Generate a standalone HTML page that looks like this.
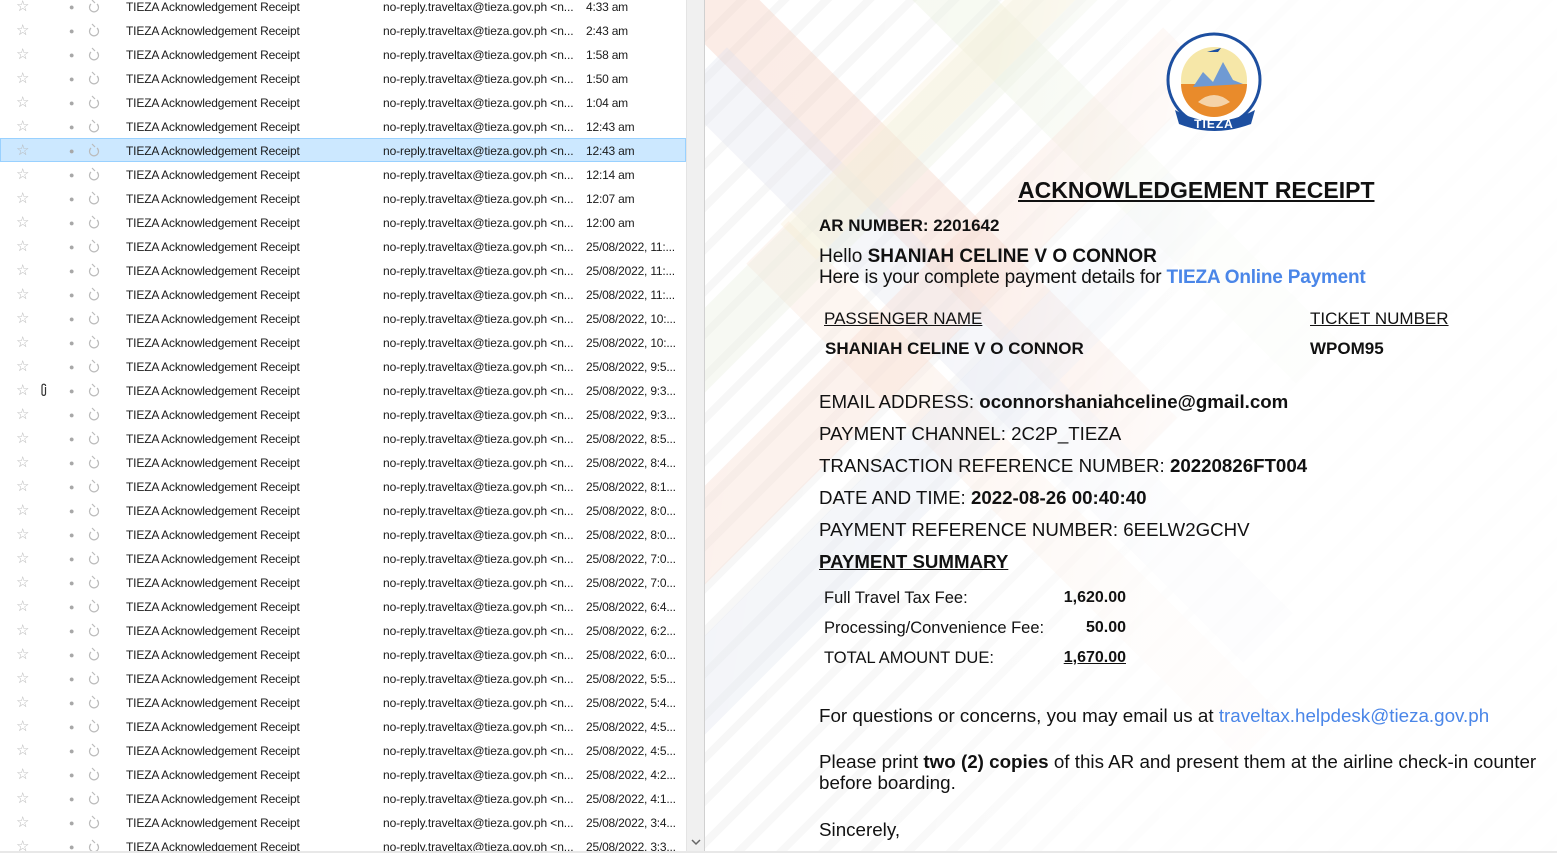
<!DOCTYPE html>
<html><head><meta charset="utf-8"><style>
*{margin:0;padding:0;box-sizing:border-box}
body{width:1557px;height:853px;overflow:hidden;background:#fff;font-family:"Liberation Sans",Arial,sans-serif;position:relative}
#list{position:absolute;left:0;top:0;width:686px;height:853px;overflow:hidden;background:#fff}
.r{position:absolute;left:0;width:686px;height:24px;font-size:12px;line-height:24px;color:#1a1a1a;white-space:nowrap}
.r.sel{background:#cce8ff;border:1px solid #99d1ff}
.r span{position:absolute;top:1px}
.st{left:16px;color:#b8b8b8;font-size:15px}
.dt{left:69px;color:#a8a8a8;font-size:9px}
.s1{left:126px;letter-spacing:-0.15px}.s2{left:383px;letter-spacing:-0.1px}.s3{left:586px;letter-spacing:-0.2px}
#sb{position:absolute;left:686px;top:0;width:18px;height:853px;background:#f0f0f0;border-left:1px solid #e4e4e4}
#div{position:absolute;left:704px;top:0;width:1px;height:853px;background:#d0d0d0}
#pane{position:absolute;left:705px;top:0;width:852px;height:853px;overflow:hidden;background:repeating-linear-gradient(135deg,#fff 0 22px,#f7f7f7 22px 30px)}
.band{position:absolute;transform:rotate(45deg);opacity:.35}
.band2{position:absolute;transform:rotate(-45deg);opacity:.35}
.t{position:absolute;white-space:nowrap;color:#111}
b{font-weight:bold}
.blue{color:#4a86e8}
</style></head><body>
<div id="list">
<div class="r" style="top:-6px"><span class="st">☆</span><span class="dt">●</span><svg style="position:absolute;left:88px;top:5px" width="12" height="14" viewBox="0 0 12 14"><path d="M4 1 L7 4 M3 5 A4.5 4.5 0 1 0 9 5" fill="none" stroke="#bbb" stroke-width="1.2"/></svg><span class="s1">TIEZA Acknowledgement Receipt</span><span class="s2">no-reply.traveltax@tieza.gov.ph &lt;n...</span><span class="s3">4:33 am</span></div>
<div class="r" style="top:18px"><span class="st">☆</span><span class="dt">●</span><svg style="position:absolute;left:88px;top:5px" width="12" height="14" viewBox="0 0 12 14"><path d="M4 1 L7 4 M3 5 A4.5 4.5 0 1 0 9 5" fill="none" stroke="#bbb" stroke-width="1.2"/></svg><span class="s1">TIEZA Acknowledgement Receipt</span><span class="s2">no-reply.traveltax@tieza.gov.ph &lt;n...</span><span class="s3">2:43 am</span></div>
<div class="r" style="top:42px"><span class="st">☆</span><span class="dt">●</span><svg style="position:absolute;left:88px;top:5px" width="12" height="14" viewBox="0 0 12 14"><path d="M4 1 L7 4 M3 5 A4.5 4.5 0 1 0 9 5" fill="none" stroke="#bbb" stroke-width="1.2"/></svg><span class="s1">TIEZA Acknowledgement Receipt</span><span class="s2">no-reply.traveltax@tieza.gov.ph &lt;n...</span><span class="s3">1:58 am</span></div>
<div class="r" style="top:66px"><span class="st">☆</span><span class="dt">●</span><svg style="position:absolute;left:88px;top:5px" width="12" height="14" viewBox="0 0 12 14"><path d="M4 1 L7 4 M3 5 A4.5 4.5 0 1 0 9 5" fill="none" stroke="#bbb" stroke-width="1.2"/></svg><span class="s1">TIEZA Acknowledgement Receipt</span><span class="s2">no-reply.traveltax@tieza.gov.ph &lt;n...</span><span class="s3">1:50 am</span></div>
<div class="r" style="top:90px"><span class="st">☆</span><span class="dt">●</span><svg style="position:absolute;left:88px;top:5px" width="12" height="14" viewBox="0 0 12 14"><path d="M4 1 L7 4 M3 5 A4.5 4.5 0 1 0 9 5" fill="none" stroke="#bbb" stroke-width="1.2"/></svg><span class="s1">TIEZA Acknowledgement Receipt</span><span class="s2">no-reply.traveltax@tieza.gov.ph &lt;n...</span><span class="s3">1:04 am</span></div>
<div class="r" style="top:114px"><span class="st">☆</span><span class="dt">●</span><svg style="position:absolute;left:88px;top:5px" width="12" height="14" viewBox="0 0 12 14"><path d="M4 1 L7 4 M3 5 A4.5 4.5 0 1 0 9 5" fill="none" stroke="#bbb" stroke-width="1.2"/></svg><span class="s1">TIEZA Acknowledgement Receipt</span><span class="s2">no-reply.traveltax@tieza.gov.ph &lt;n...</span><span class="s3">12:43 am</span></div>
<div class="r sel" style="top:138px"><span class="st" style="left:15px;top:0">☆</span><span class="dt" style="left:68px;top:0">●</span><svg style="position:absolute;left:87px;top:4px" width="12" height="14" viewBox="0 0 12 14"><path d="M4 1 L7 4 M3 5 A4.5 4.5 0 1 0 9 5" fill="none" stroke="#bbb" stroke-width="1.2"/></svg><span class="s1" style="left:125px;top:0">TIEZA Acknowledgement Receipt</span><span class="s2" style="left:382px;top:0">no-reply.traveltax@tieza.gov.ph &lt;n...</span><span class="s3" style="left:585px;top:0">12:43 am</span></div>
<div class="r" style="top:162px"><span class="st">☆</span><span class="dt">●</span><svg style="position:absolute;left:88px;top:5px" width="12" height="14" viewBox="0 0 12 14"><path d="M4 1 L7 4 M3 5 A4.5 4.5 0 1 0 9 5" fill="none" stroke="#bbb" stroke-width="1.2"/></svg><span class="s1">TIEZA Acknowledgement Receipt</span><span class="s2">no-reply.traveltax@tieza.gov.ph &lt;n...</span><span class="s3">12:14 am</span></div>
<div class="r" style="top:186px"><span class="st">☆</span><span class="dt">●</span><svg style="position:absolute;left:88px;top:5px" width="12" height="14" viewBox="0 0 12 14"><path d="M4 1 L7 4 M3 5 A4.5 4.5 0 1 0 9 5" fill="none" stroke="#bbb" stroke-width="1.2"/></svg><span class="s1">TIEZA Acknowledgement Receipt</span><span class="s2">no-reply.traveltax@tieza.gov.ph &lt;n...</span><span class="s3">12:07 am</span></div>
<div class="r" style="top:210px"><span class="st">☆</span><span class="dt">●</span><svg style="position:absolute;left:88px;top:5px" width="12" height="14" viewBox="0 0 12 14"><path d="M4 1 L7 4 M3 5 A4.5 4.5 0 1 0 9 5" fill="none" stroke="#bbb" stroke-width="1.2"/></svg><span class="s1">TIEZA Acknowledgement Receipt</span><span class="s2">no-reply.traveltax@tieza.gov.ph &lt;n...</span><span class="s3">12:00 am</span></div>
<div class="r" style="top:234px"><span class="st">☆</span><span class="dt">●</span><svg style="position:absolute;left:88px;top:5px" width="12" height="14" viewBox="0 0 12 14"><path d="M4 1 L7 4 M3 5 A4.5 4.5 0 1 0 9 5" fill="none" stroke="#bbb" stroke-width="1.2"/></svg><span class="s1">TIEZA Acknowledgement Receipt</span><span class="s2">no-reply.traveltax@tieza.gov.ph &lt;n...</span><span class="s3">25/08/2022, 11:...</span></div>
<div class="r" style="top:258px"><span class="st">☆</span><span class="dt">●</span><svg style="position:absolute;left:88px;top:5px" width="12" height="14" viewBox="0 0 12 14"><path d="M4 1 L7 4 M3 5 A4.5 4.5 0 1 0 9 5" fill="none" stroke="#bbb" stroke-width="1.2"/></svg><span class="s1">TIEZA Acknowledgement Receipt</span><span class="s2">no-reply.traveltax@tieza.gov.ph &lt;n...</span><span class="s3">25/08/2022, 11:...</span></div>
<div class="r" style="top:282px"><span class="st">☆</span><span class="dt">●</span><svg style="position:absolute;left:88px;top:5px" width="12" height="14" viewBox="0 0 12 14"><path d="M4 1 L7 4 M3 5 A4.5 4.5 0 1 0 9 5" fill="none" stroke="#bbb" stroke-width="1.2"/></svg><span class="s1">TIEZA Acknowledgement Receipt</span><span class="s2">no-reply.traveltax@tieza.gov.ph &lt;n...</span><span class="s3">25/08/2022, 11:...</span></div>
<div class="r" style="top:306px"><span class="st">☆</span><span class="dt">●</span><svg style="position:absolute;left:88px;top:5px" width="12" height="14" viewBox="0 0 12 14"><path d="M4 1 L7 4 M3 5 A4.5 4.5 0 1 0 9 5" fill="none" stroke="#bbb" stroke-width="1.2"/></svg><span class="s1">TIEZA Acknowledgement Receipt</span><span class="s2">no-reply.traveltax@tieza.gov.ph &lt;n...</span><span class="s3">25/08/2022, 10:...</span></div>
<div class="r" style="top:330px"><span class="st">☆</span><span class="dt">●</span><svg style="position:absolute;left:88px;top:5px" width="12" height="14" viewBox="0 0 12 14"><path d="M4 1 L7 4 M3 5 A4.5 4.5 0 1 0 9 5" fill="none" stroke="#bbb" stroke-width="1.2"/></svg><span class="s1">TIEZA Acknowledgement Receipt</span><span class="s2">no-reply.traveltax@tieza.gov.ph &lt;n...</span><span class="s3">25/08/2022, 10:...</span></div>
<div class="r" style="top:354px"><span class="st">☆</span><span class="dt">●</span><svg style="position:absolute;left:88px;top:5px" width="12" height="14" viewBox="0 0 12 14"><path d="M4 1 L7 4 M3 5 A4.5 4.5 0 1 0 9 5" fill="none" stroke="#bbb" stroke-width="1.2"/></svg><span class="s1">TIEZA Acknowledgement Receipt</span><span class="s2">no-reply.traveltax@tieza.gov.ph &lt;n...</span><span class="s3">25/08/2022, 9:5...</span></div>
<div class="r" style="top:378px"><span class="st">☆</span><svg style="position:absolute;left:40px;top:5px" width="8" height="14" viewBox="0 0 8 14"><path d="M5.5 4 V11 A1.8 1.8 0 0 1 2 11 V3 A1.6 1.6 0 0 1 5.6 3" fill="none" stroke="#333" stroke-width="1.2"/></svg><span class="dt">●</span><svg style="position:absolute;left:88px;top:5px" width="12" height="14" viewBox="0 0 12 14"><path d="M4 1 L7 4 M3 5 A4.5 4.5 0 1 0 9 5" fill="none" stroke="#bbb" stroke-width="1.2"/></svg><span class="s1">TIEZA Acknowledgement Receipt</span><span class="s2">no-reply.traveltax@tieza.gov.ph &lt;n...</span><span class="s3">25/08/2022, 9:3...</span></div>
<div class="r" style="top:402px"><span class="st">☆</span><span class="dt">●</span><svg style="position:absolute;left:88px;top:5px" width="12" height="14" viewBox="0 0 12 14"><path d="M4 1 L7 4 M3 5 A4.5 4.5 0 1 0 9 5" fill="none" stroke="#bbb" stroke-width="1.2"/></svg><span class="s1">TIEZA Acknowledgement Receipt</span><span class="s2">no-reply.traveltax@tieza.gov.ph &lt;n...</span><span class="s3">25/08/2022, 9:3...</span></div>
<div class="r" style="top:426px"><span class="st">☆</span><span class="dt">●</span><svg style="position:absolute;left:88px;top:5px" width="12" height="14" viewBox="0 0 12 14"><path d="M4 1 L7 4 M3 5 A4.5 4.5 0 1 0 9 5" fill="none" stroke="#bbb" stroke-width="1.2"/></svg><span class="s1">TIEZA Acknowledgement Receipt</span><span class="s2">no-reply.traveltax@tieza.gov.ph &lt;n...</span><span class="s3">25/08/2022, 8:5...</span></div>
<div class="r" style="top:450px"><span class="st">☆</span><span class="dt">●</span><svg style="position:absolute;left:88px;top:5px" width="12" height="14" viewBox="0 0 12 14"><path d="M4 1 L7 4 M3 5 A4.5 4.5 0 1 0 9 5" fill="none" stroke="#bbb" stroke-width="1.2"/></svg><span class="s1">TIEZA Acknowledgement Receipt</span><span class="s2">no-reply.traveltax@tieza.gov.ph &lt;n...</span><span class="s3">25/08/2022, 8:4...</span></div>
<div class="r" style="top:474px"><span class="st">☆</span><span class="dt">●</span><svg style="position:absolute;left:88px;top:5px" width="12" height="14" viewBox="0 0 12 14"><path d="M4 1 L7 4 M3 5 A4.5 4.5 0 1 0 9 5" fill="none" stroke="#bbb" stroke-width="1.2"/></svg><span class="s1">TIEZA Acknowledgement Receipt</span><span class="s2">no-reply.traveltax@tieza.gov.ph &lt;n...</span><span class="s3">25/08/2022, 8:1...</span></div>
<div class="r" style="top:498px"><span class="st">☆</span><span class="dt">●</span><svg style="position:absolute;left:88px;top:5px" width="12" height="14" viewBox="0 0 12 14"><path d="M4 1 L7 4 M3 5 A4.5 4.5 0 1 0 9 5" fill="none" stroke="#bbb" stroke-width="1.2"/></svg><span class="s1">TIEZA Acknowledgement Receipt</span><span class="s2">no-reply.traveltax@tieza.gov.ph &lt;n...</span><span class="s3">25/08/2022, 8:0...</span></div>
<div class="r" style="top:522px"><span class="st">☆</span><span class="dt">●</span><svg style="position:absolute;left:88px;top:5px" width="12" height="14" viewBox="0 0 12 14"><path d="M4 1 L7 4 M3 5 A4.5 4.5 0 1 0 9 5" fill="none" stroke="#bbb" stroke-width="1.2"/></svg><span class="s1">TIEZA Acknowledgement Receipt</span><span class="s2">no-reply.traveltax@tieza.gov.ph &lt;n...</span><span class="s3">25/08/2022, 8:0...</span></div>
<div class="r" style="top:546px"><span class="st">☆</span><span class="dt">●</span><svg style="position:absolute;left:88px;top:5px" width="12" height="14" viewBox="0 0 12 14"><path d="M4 1 L7 4 M3 5 A4.5 4.5 0 1 0 9 5" fill="none" stroke="#bbb" stroke-width="1.2"/></svg><span class="s1">TIEZA Acknowledgement Receipt</span><span class="s2">no-reply.traveltax@tieza.gov.ph &lt;n...</span><span class="s3">25/08/2022, 7:0...</span></div>
<div class="r" style="top:570px"><span class="st">☆</span><span class="dt">●</span><svg style="position:absolute;left:88px;top:5px" width="12" height="14" viewBox="0 0 12 14"><path d="M4 1 L7 4 M3 5 A4.5 4.5 0 1 0 9 5" fill="none" stroke="#bbb" stroke-width="1.2"/></svg><span class="s1">TIEZA Acknowledgement Receipt</span><span class="s2">no-reply.traveltax@tieza.gov.ph &lt;n...</span><span class="s3">25/08/2022, 7:0...</span></div>
<div class="r" style="top:594px"><span class="st">☆</span><span class="dt">●</span><svg style="position:absolute;left:88px;top:5px" width="12" height="14" viewBox="0 0 12 14"><path d="M4 1 L7 4 M3 5 A4.5 4.5 0 1 0 9 5" fill="none" stroke="#bbb" stroke-width="1.2"/></svg><span class="s1">TIEZA Acknowledgement Receipt</span><span class="s2">no-reply.traveltax@tieza.gov.ph &lt;n...</span><span class="s3">25/08/2022, 6:4...</span></div>
<div class="r" style="top:618px"><span class="st">☆</span><span class="dt">●</span><svg style="position:absolute;left:88px;top:5px" width="12" height="14" viewBox="0 0 12 14"><path d="M4 1 L7 4 M3 5 A4.5 4.5 0 1 0 9 5" fill="none" stroke="#bbb" stroke-width="1.2"/></svg><span class="s1">TIEZA Acknowledgement Receipt</span><span class="s2">no-reply.traveltax@tieza.gov.ph &lt;n...</span><span class="s3">25/08/2022, 6:2...</span></div>
<div class="r" style="top:642px"><span class="st">☆</span><span class="dt">●</span><svg style="position:absolute;left:88px;top:5px" width="12" height="14" viewBox="0 0 12 14"><path d="M4 1 L7 4 M3 5 A4.5 4.5 0 1 0 9 5" fill="none" stroke="#bbb" stroke-width="1.2"/></svg><span class="s1">TIEZA Acknowledgement Receipt</span><span class="s2">no-reply.traveltax@tieza.gov.ph &lt;n...</span><span class="s3">25/08/2022, 6:0...</span></div>
<div class="r" style="top:666px"><span class="st">☆</span><span class="dt">●</span><svg style="position:absolute;left:88px;top:5px" width="12" height="14" viewBox="0 0 12 14"><path d="M4 1 L7 4 M3 5 A4.5 4.5 0 1 0 9 5" fill="none" stroke="#bbb" stroke-width="1.2"/></svg><span class="s1">TIEZA Acknowledgement Receipt</span><span class="s2">no-reply.traveltax@tieza.gov.ph &lt;n...</span><span class="s3">25/08/2022, 5:5...</span></div>
<div class="r" style="top:690px"><span class="st">☆</span><span class="dt">●</span><svg style="position:absolute;left:88px;top:5px" width="12" height="14" viewBox="0 0 12 14"><path d="M4 1 L7 4 M3 5 A4.5 4.5 0 1 0 9 5" fill="none" stroke="#bbb" stroke-width="1.2"/></svg><span class="s1">TIEZA Acknowledgement Receipt</span><span class="s2">no-reply.traveltax@tieza.gov.ph &lt;n...</span><span class="s3">25/08/2022, 5:4...</span></div>
<div class="r" style="top:714px"><span class="st">☆</span><span class="dt">●</span><svg style="position:absolute;left:88px;top:5px" width="12" height="14" viewBox="0 0 12 14"><path d="M4 1 L7 4 M3 5 A4.5 4.5 0 1 0 9 5" fill="none" stroke="#bbb" stroke-width="1.2"/></svg><span class="s1">TIEZA Acknowledgement Receipt</span><span class="s2">no-reply.traveltax@tieza.gov.ph &lt;n...</span><span class="s3">25/08/2022, 4:5...</span></div>
<div class="r" style="top:738px"><span class="st">☆</span><span class="dt">●</span><svg style="position:absolute;left:88px;top:5px" width="12" height="14" viewBox="0 0 12 14"><path d="M4 1 L7 4 M3 5 A4.5 4.5 0 1 0 9 5" fill="none" stroke="#bbb" stroke-width="1.2"/></svg><span class="s1">TIEZA Acknowledgement Receipt</span><span class="s2">no-reply.traveltax@tieza.gov.ph &lt;n...</span><span class="s3">25/08/2022, 4:5...</span></div>
<div class="r" style="top:762px"><span class="st">☆</span><span class="dt">●</span><svg style="position:absolute;left:88px;top:5px" width="12" height="14" viewBox="0 0 12 14"><path d="M4 1 L7 4 M3 5 A4.5 4.5 0 1 0 9 5" fill="none" stroke="#bbb" stroke-width="1.2"/></svg><span class="s1">TIEZA Acknowledgement Receipt</span><span class="s2">no-reply.traveltax@tieza.gov.ph &lt;n...</span><span class="s3">25/08/2022, 4:2...</span></div>
<div class="r" style="top:786px"><span class="st">☆</span><span class="dt">●</span><svg style="position:absolute;left:88px;top:5px" width="12" height="14" viewBox="0 0 12 14"><path d="M4 1 L7 4 M3 5 A4.5 4.5 0 1 0 9 5" fill="none" stroke="#bbb" stroke-width="1.2"/></svg><span class="s1">TIEZA Acknowledgement Receipt</span><span class="s2">no-reply.traveltax@tieza.gov.ph &lt;n...</span><span class="s3">25/08/2022, 4:1...</span></div>
<div class="r" style="top:810px"><span class="st">☆</span><span class="dt">●</span><svg style="position:absolute;left:88px;top:5px" width="12" height="14" viewBox="0 0 12 14"><path d="M4 1 L7 4 M3 5 A4.5 4.5 0 1 0 9 5" fill="none" stroke="#bbb" stroke-width="1.2"/></svg><span class="s1">TIEZA Acknowledgement Receipt</span><span class="s2">no-reply.traveltax@tieza.gov.ph &lt;n...</span><span class="s3">25/08/2022, 3:4...</span></div>
<div class="r" style="top:834px"><span class="st">☆</span><span class="dt">●</span><svg style="position:absolute;left:88px;top:5px" width="12" height="14" viewBox="0 0 12 14"><path d="M4 1 L7 4 M3 5 A4.5 4.5 0 1 0 9 5" fill="none" stroke="#bbb" stroke-width="1.2"/></svg><span class="s1">TIEZA Acknowledgement Receipt</span><span class="s2">no-reply.traveltax@tieza.gov.ph &lt;n...</span><span class="s3">25/08/2022, 3:3...</span></div>
</div>
<div id="sb"><svg style="position:absolute;left:4px;top:838px" width="10" height="8" viewBox="0 0 10 8"><path d="M1 2 L5 6 L9 2" fill="none" stroke="#666" stroke-width="1.5"/></svg></div>
<div id="div"></div>
<div id="pane">
  <div class="band" style="left:-150px;top:160px;width:700px;height:70px;background:#f4c9b8"></div>
  <div class="band" style="left:-120px;top:320px;width:800px;height:70px;background:#dfe3ef"></div>
  <div class="band" style="left:-40px;top:460px;width:700px;height:60px;background:#f9e3d5"></div>
  <div class="band" style="left:100px;top:120px;width:600px;height:60px;background:#e6efd7"></div>
  <div class="band2" style="left:-200px;top:300px;width:800px;height:70px;background:#f5d6c8"></div>
  <div class="band2" style="left:-150px;top:120px;width:700px;height:60px;background:#e8efdc"></div>
  <div class="band2" style="left:-280px;top:480px;width:900px;height:70px;background:#dde2ee"></div>
  <div class="band2" style="left:20px;top:40px;width:500px;height:50px;background:#f8eed2"></div>
  <div style="position:absolute;left:0;top:0;width:852px;height:853px;background:linear-gradient(100deg,rgba(255,255,255,0) 0%,rgba(255,255,255,.1) 30%,rgba(255,255,255,.8) 55%,rgba(255,255,255,.92) 100%)"></div>
</div>
<!-- logo -->
<svg style="position:absolute;left:1163px;top:32px" width="104" height="104" viewBox="0 0 104 104">
  <circle cx="51" cy="48" r="46" fill="#fff" stroke="#1d4fa0" stroke-width="3"/>
  <circle cx="51" cy="48" r="33" fill="#f6e7a8"/>
  <path d="M18 52 A33 33 0 0 0 84 52 Z" fill="#e98b2b"/>
  <path d="M30 55 L40 40 L50 50 L60 30 L70 48 L80 52 Z" fill="#6f9ad3"/>
  <path d="M35 70 Q51 56 67 70 Q51 80 35 70Z" fill="#f5d3a8"/>
  <path d="M44 20 l14 -4 l-3 4 z" fill="#1d4fa0"/>
  <path d="M12 78 Q51 100 92 78 L88 92 Q51 106 16 92 Z" fill="#1d4fa0"/>
  <text x="51" y="96" text-anchor="middle" font-family="Liberation Sans" font-weight="bold" font-size="12" fill="#fff" letter-spacing="1">TIEZA</text>
</svg>
<div class="t" style="left:1018px;top:177px;font-size:23px;font-weight:bold;text-decoration:underline">ACKNOWLEDGEMENT RECEIPT</div>
<div class="t" style="left:819px;top:216px;font-size:17px;font-weight:bold">AR NUMBER: 2201642</div>
<div class="t" style="left:819px;top:246px;font-size:19px">Hello <b>SHANIAH CELINE V O CONNOR</b></div>
<div class="t" style="left:819px;top:267px;font-size:19px;letter-spacing:-0.2px">Here is your complete payment details for <b class="blue">TIEZA Online Payment</b></div>
<div class="t" style="left:824px;top:309px;font-size:17px;text-decoration:underline">PASSENGER NAME</div>
<div class="t" style="left:1310px;top:309px;font-size:17px;text-decoration:underline">TICKET NUMBER</div>
<div class="t" style="left:825px;top:339px;font-size:17px;font-weight:bold">SHANIAH CELINE V O CONNOR</div>
<div class="t" style="left:1310px;top:339px;font-size:17px;font-weight:bold">WPOM95</div>
<div class="t" style="left:819px;top:391px;font-size:18.7px">EMAIL ADDRESS: <b>oconnorshaniahceline@gmail.com</b></div>
<div class="t" style="left:819px;top:423px;font-size:18.7px">PAYMENT CHANNEL: 2C2P_TIEZA</div>
<div class="t" style="left:819px;top:455px;font-size:18.7px">TRANSACTION REFERENCE NUMBER: <b>20220826FT004</b></div>
<div class="t" style="left:819px;top:487px;font-size:18.7px">DATE AND TIME: <b>2022-08-26 00:40:40</b></div>
<div class="t" style="left:819px;top:519px;font-size:18.7px">PAYMENT REFERENCE NUMBER: 6EELW2GCHV</div>
<div class="t" style="left:819px;top:551px;font-size:18.7px;font-weight:bold;text-decoration:underline">PAYMENT SUMMARY</div>
<div class="t" style="left:824px;top:589px;font-size:16.5px">Full Travel Tax Fee:</div>
<div class="t" style="left:824px;top:619px;font-size:16.5px">Processing/Convenience Fee:</div>
<div class="t" style="left:824px;top:649px;font-size:16.5px">TOTAL AMOUNT DUE:</div>
<div class="t" style="right:431px;top:589px;font-size:16px;font-weight:bold">1,620.00</div>
<div class="t" style="right:431px;top:619px;font-size:16px;font-weight:bold">50.00</div>
<div class="t" style="right:431px;top:649px;font-size:16px;font-weight:bold;text-decoration:underline">1,670.00</div>
<div class="t" style="left:819px;top:705px;font-size:18.8px">For questions or concerns, you may email us at <span class="blue">traveltax.helpdesk@tieza.gov.ph</span></div>
<div class="t" style="left:819px;top:751px;font-size:18.8px">Please print <b>two (2) copies</b> of this AR and present them at the airline check-in counter</div>
<div class="t" style="left:819px;top:772px;font-size:18.8px">before boarding.</div>
<div class="t" style="left:819px;top:819px;font-size:18.8px">Sincerely,</div>
<div style="position:absolute;left:0;top:851px;width:1557px;height:2px;background:#e8e8e8"></div>
</body></html>
